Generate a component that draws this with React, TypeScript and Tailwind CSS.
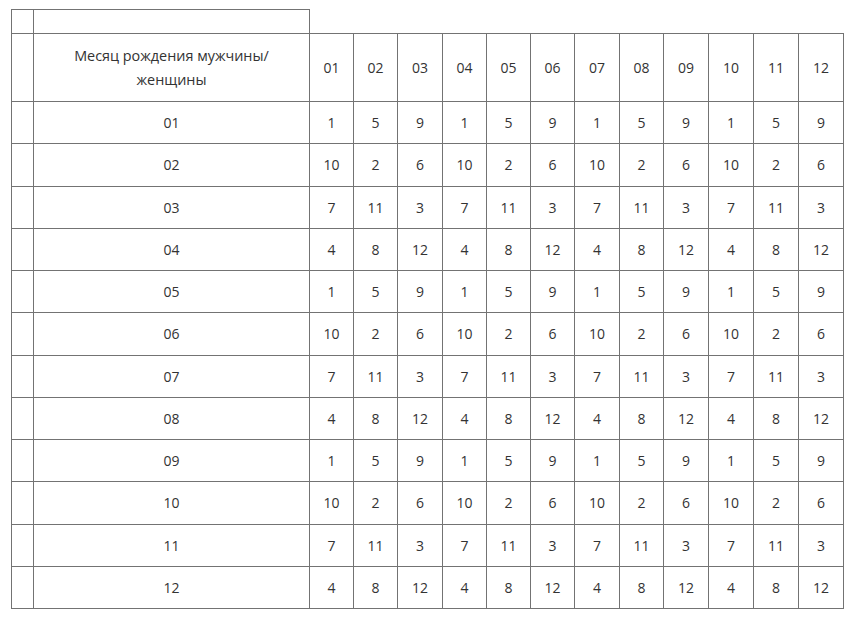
import React from 'react';

const months = ['01', '02', '03', '04', '05', '06', '07', '08', '09', '10', '11', '12'];
const cycle = [
  [1, 5, 9],
  [10, 2, 6],
  [7, 11, 3],
  [4, 8, 12],
];
// column widths measured from the reference
const colW = ['w-[44px]', 'w-[44px]', 'w-[45px]', 'w-[44px]', 'w-[44px]', 'w-[44px]', 'w-[45px]', 'w-[44px]', 'w-[45px]', 'w-[45px]', 'w-[45px]', 'w-[45px]'];

const cell = 'border border-[#737373] text-center align-middle p-0';

export default function App() {
  return (
    <div className="min-h-screen bg-white pl-[11px] pt-[9px] text-[14px] text-[#333333]" style={{ fontFamily: '"Open Sans", "Noto Sans", sans-serif' }}>
      <table className="table-fixed border-collapse w-[832px]">
        <colgroup>
          <col className="w-[22px]" />
          <col className="w-[276px]" />
          {colW.map((w, i) => (
            <col key={i} className={w} />
          ))}
        </colgroup>
        <tbody>
          <tr className="h-[24px]">
            <td className={cell}></td>
            <td className={cell}></td>
          </tr>
          <tr className="h-[68px]">
            <td className={cell}></td>
            <td className={`${cell} leading-[24px] text-[14.4px]`}>
              Месяц рождения мужчины/
              <br />
              женщины
            </td>
            {months.map((m) => (
              <td key={m} className={cell}>{m}</td>
            ))}
          </tr>
          {months.map((m, i) => (
            <tr key={m} className="h-[42.25px]">
              <td className={cell}></td>
              <td className={cell}>{m}</td>
              {months.map((c, j) => (
                <td key={c} className={cell}>{cycle[i % 4][j % 3]}</td>
              ))}
            </tr>
          ))}
        </tbody>
      </table>
    </div>
  );
}
